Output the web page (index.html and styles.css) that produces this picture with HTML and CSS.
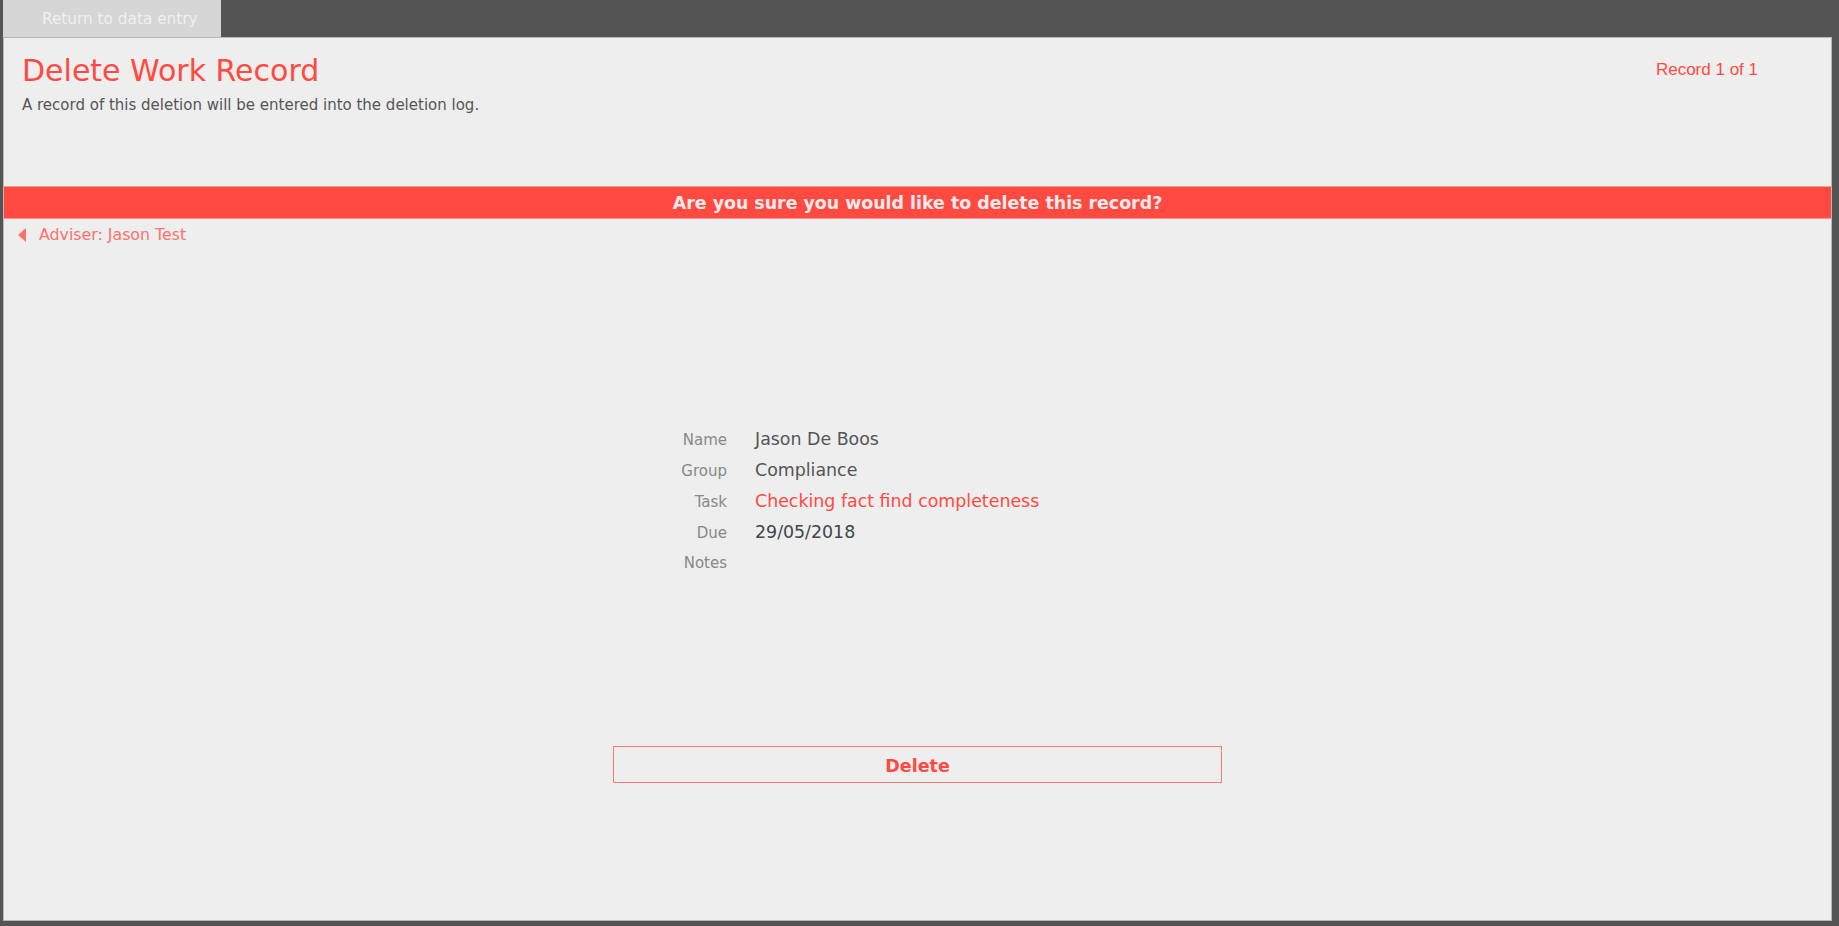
FILE: index.html
```html
<!DOCTYPE html>
<html lang="en">
<head>
    <meta charset="UTF-8">
    <meta name="viewport" content="width=device-width, initial-scale=1.0">
    <title>Delete Work Record</title>
    <link rel="stylesheet" href="styles.css">
</head>
<body>
    <!-- Tabs -->
    <div class="tabs">
        <div class="tab">Return to data entry</div>
    </div>

    <div class="panel">
        <!-- Header -->
        <div class="header">
            <div class="heading">
                <h1>Delete Work Record</h1>
                <p class="subtitle">A record of this deletion will be entered into the deletion log.</p>
            </div>
            <div class="counter">Record 1 of 1</div>
        </div>

        <div class="confirm_bar">Are you sure you would like to delete this record?</div>

        <div class="back_link"><span class="arrow"></span>Adviser: Jason Test</div>

        <!-- Record details -->
        <div class="form">
            <div class="row">
                <span class="label">Name</span>
                <span class="value">Jason De Boos</span>
            </div>
            <div class="row">
                <span class="label">Group</span>
                <span class="value">Compliance</span>
            </div>
            <div class="row">
                <span class="label">Task</span>
                <span class="value task">Checking fact find completeness</span>
            </div>
            <div class="row">
                <span class="label">Due</span>
                <span class="value date">29/05/2018</span>
            </div>
            <div class="row">
                <span class="label">Notes</span>
                <span class="value"></span>
            </div>

            <button class="delete">Delete</button>
        </div>
    </div>
</body>
</html>
```

FILE: styles.css
```css
* {
    box-sizing: border-box;
}

html, body {
    height: 100%;
}

body {
    margin: 0;
    padding: 0 7px 5px 3px;
    display: flex;
    flex-direction: column;
    background-color: #545454;
    font-family: "DejaVu Sans", Verdana, sans-serif;
}

.tabs {
    display: flex;
    height: 37px;
}

.tab {
    width: 218px;
    height: 37px;
    padding: 2px 0 0 39px;
    line-height: 35px;
    font-size: 15.3px;
    color: #f0f0f0;
    background-color: #d6d6d6;
}

.panel {
    flex: 1;
    background-color: #eeeeee;
    border: 1px solid #b8b8b8;
}

.header {
    display: flex;
    justify-content: space-between;
    padding: 15px 73px 0 18px;
}

h1 {
    margin: 0;
    font-size: 30px;
    line-height: 36px;
    font-weight: normal;
    color: #ff4a42;
}

.subtitle {
    margin: 7px 0 0 0;
    font-size: 15px;
    line-height: 18px;
    color: #555;
}

.counter {
    margin-top: 7px;
    font-family: "Liberation Sans", Arial, sans-serif;
    font-size: 17px;
    line-height: 20px;
    color: #ff4a42;
}

.confirm_bar {
    margin-top: 72px;
    padding-top: 2px;
    height: 33px;
    line-height: 29px;
    text-align: center;
    font-size: 17.4px;
    font-weight: bold;
    color: #fbeaea;
    background-color: #ff4a42;
    border-top: 1px solid #ff9590;
    border-bottom: 1px solid #ff9590;
}

.back_link {
    display: flex;
    align-items: center;
    margin-top: 7px;
    padding-left: 14px;
    font-size: 15.8px;
    line-height: 18px;
    color: #ff716b;
}

.arrow {
    width: 0;
    height: 0;
    margin-right: 13px;
    border-top: 7px solid transparent;
    border-bottom: 7px solid transparent;
    border-right: 8px solid #ff716b;
}

.form {
    width: 609px;
    margin: 180px auto 0 auto;
}

.row {
    display: flex;
    align-items: baseline;
    height: 31px;
    line-height: 31px;
}

.label {
    width: 114px;
    margin-right: 28px;
    text-align: right;
    font-size: 15px;
    color: #888;
}

.value {
    font-size: 17.4px;
    color: #555;
}

.value.task {
    color: #ff4a42;
}

.value.date {
    color: #3e4848;
}

button.delete {
    display: block;
    width: 100%;
    height: 37px;
    margin-top: 167px;
    padding: 3px 0 0 0;
    font-family: "DejaVu Sans", Verdana, sans-serif;
    font-size: 17.5px;
    font-weight: bold;
    color: #ff4a42;
    background-color: transparent;
    border: 1px solid #ff7a75;
    cursor: pointer;
}
```
